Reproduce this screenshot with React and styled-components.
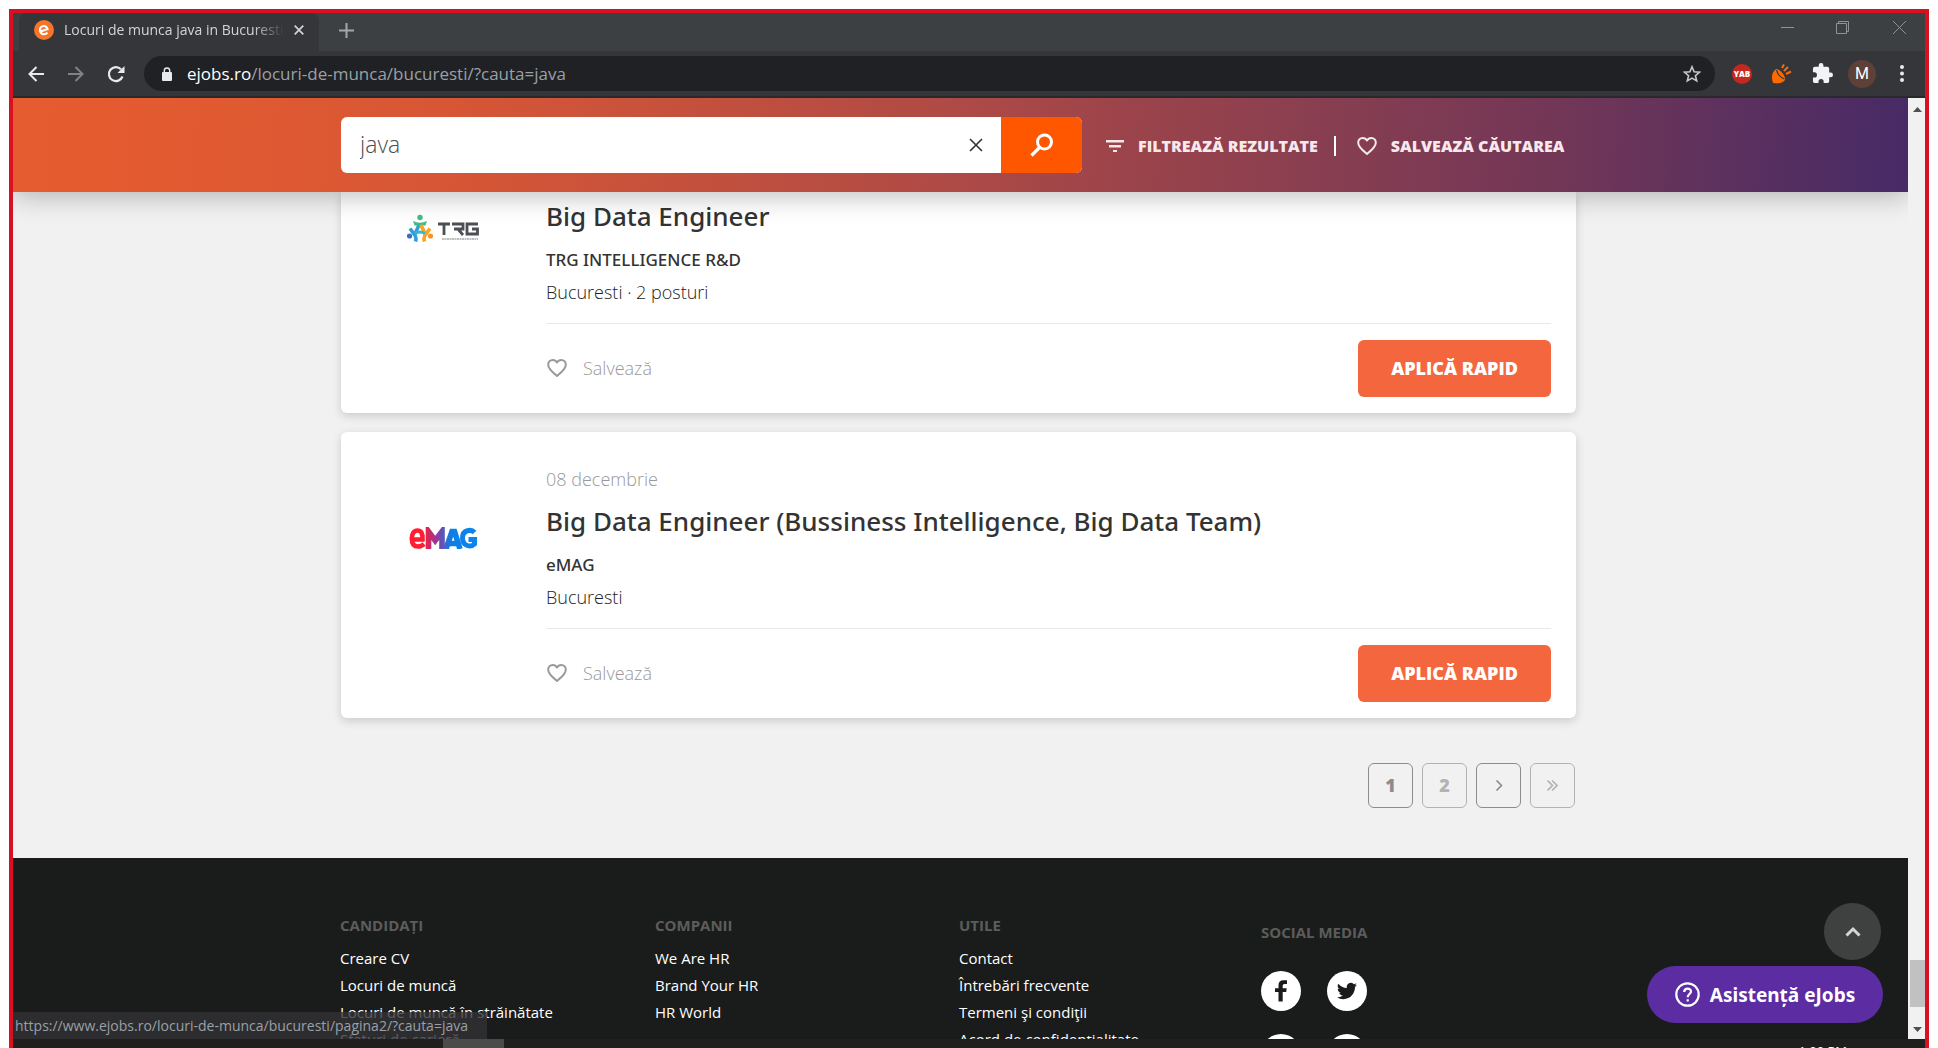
import React from 'react';
import styled, { createGlobalStyle } from 'styled-components';

const Global = createGlobalStyle`
  * { box-sizing: border-box; }
  html, body { margin: 0; height: 100%; }
  #root { height: 100%; }
  body { background: #fff; font-family: "Open Sans", "Noto Sans", sans-serif; color: #333; }
  button, input { font: inherit; border: 0; padding: 0; margin: 0; background: none; color: inherit; }
  button { cursor: pointer; }
  a { color: inherit; text-decoration: none; }
  h2, p, ul { margin: 0; padding: 0; }
  ul { list-style: none; }
  svg { display: block; flex: none; }
`;

const Screen = styled.div`
  height: 100vh;
  padding: 9px 9px 0;
  overflow: hidden;
`;
const Frame = styled.div`
  height: 100%;
  border: 4px solid #d81020;
  border-bottom: 0;
  display: flex;
  flex-direction: column;
`;

/* Browser chrome */
const TabStrip = styled.div`
  display: flex;
  height: 38px;
  flex: none;
  background: #3c4043;
  color: #a5a8ab;
  padding-left: 6px;
`;
const Tab = styled.div`
  width: 300px;
  display: flex;
  align-items: center;
  gap: 10px;
  padding: 0 15px 4px;
  border-radius: 8px 8px 0 0;
  background: #35363a;
  color: #d2d4d6;
`;
const TabTitle = styled.span`
  flex: 1;
  overflow: hidden;
  white-space: nowrap;
  font-size: 14px;
  line-height: 20px;
  mask-image: linear-gradient(to right, #000 86%, transparent);
`;
const ChromeButton = styled.button`
  display: flex;
  align-items: center;
  justify-content: center;
  width: ${p => p.$w || 40}px;
`;
const NewTab = styled(ChromeButton)`
  margin-left: 7px;
  padding-bottom: 4px;
`;
const WindowControls = styled.div`
  display: flex;
  margin-left: auto;
  padding-bottom: 10px;
`;
const Toolbar = styled.div`
  display: flex;
  align-items: center;
  height: 47px;
  flex: none;
  background: #35363a;
  border-bottom: 2px solid #28292b;
  color: #e8eaed;
  padding: 0 3px;
`;
const Address = styled.label`
  flex: 1;
  display: flex;
  align-items: center;
  height: 35px;
  margin-left: 8px;
  margin-right: 7px;
  padding: 0 14px 0 18px;
  border-radius: 18px;
  background: #202124;
  font-size: 17px;
  color: #9aa0a6;
`;
const Url = styled.span`
  flex: 1;
  margin-left: 15px;
  b { font-weight: 400; color: #fff; }
`;
const Avatar = styled.span`
  display: flex;
  align-items: center;
  justify-content: center;
  width: ${p => p.$size}px;
  height: ${p => p.$size}px;
  border-radius: 50%;
  background: ${p => p.$bg};
  color: #fff;
  font: ${p => p.$font};
`;

/* Page */
const Viewport = styled.div`
  position: relative;
  display: flex;
  flex: 1;
  min-height: 0;
`;
const Page = styled.div`
  flex: 1;
  display: flex;
  flex-direction: column;
  background: #f1f1f1;
  overflow: hidden;
`;
const Container = styled.div`
  width: 100%;
  max-width: 1239px;
  margin: 0 auto;
  padding-right: 4px;
`;
const Header = styled.header`
  position: relative;
  z-index: 1;
  flex: none;
  padding: 19px 0;
  background: linear-gradient(94deg, #e65c30 0%, #e45b30 5%, #dc5833 17%, #d35537 26%, #ae4a46 50%, #9d444a 58%, #8a3f50 68%, #713657 82%, #562f60 93%, #472a66 100%);
  box-shadow: 0 3px 26px rgba(0, 0, 0, 0.28);
`;
const HeaderRow = styled(Container)`
  display: flex;
  align-items: center;
`;
const SearchForm = styled.form`
  display: flex;
  width: 741px;
  height: 56px;
  border-radius: 6px;
  overflow: hidden;
  background: #fff;
`;
const SearchInput = styled.input`
  flex: 1;
  min-width: 0;
  padding: 0 0 2px 19px;
  outline: 0;
  font-size: 23px;
  font-weight: 300;
  color: #4d4d4d;
`;
const ClearButton = styled.button`
  width: 51px;
  display: flex;
  align-items: center;
  justify-content: center;
`;
const SearchButton = styled.button`
  width: 81px;
  display: flex;
  align-items: center;
  justify-content: center;
  background: #ff5600;
`;
const HeaderAction = styled.button`
  display: flex;
  align-items: center;
  gap: ${p => p.$gap}px;
  margin-left: ${p => p.$before}px;
  padding-top: 2px;
  color: #f6e9ec;
  font-size: 16px;
  font-weight: 800;
  white-space: nowrap;
`;
const Separator = styled.span`
  width: 2px;
  height: 20px;
  margin: 2px 0 0 16px;
  background: #fff;
`;
const CardList = styled.ul`
  display: flex;
  flex-direction: column;
  gap: 19px;
`;
const Card = styled.li`
  display: flex;
  padding: ${p => (p.$continued ? '6px' : '34px')} 25px 16px 0;
  border-radius: ${p => (p.$continued ? '0 0 6px 6px' : '6px')};
  background: #fff;
  box-shadow: 0 3px 10px rgba(0, 0, 0, 0.16);
`;
const LogoCell = styled.div`
  width: 205px;
  flex: none;
  display: flex;
  justify-content: center;
  align-items: flex-start;
  padding-top: ${p => (p.$continued ? '16px' : '61px')};
  padding-right: 2px;
`;
const CardBody = styled.div`
  flex: 1;
`;
const PostDate = styled.p`
  font-size: 18px;
  font-weight: 300;
  line-height: 26px;
  margin-bottom: 11px;
  color: #999;
`;
const JobTitle = styled.h2`
  font-family: "Noto Sans", "Open Sans", sans-serif;
  font-size: 26px;
  line-height: 36px;
  font-weight: 500;
`;
const Company = styled.p`
  margin-top: 13px;
  font-family: "Noto Sans", "Open Sans", sans-serif;
  font-size: 17px;
  line-height: 26px;
  font-weight: 500;
`;
const Place = styled.p`
  margin-top: 6px;
  font-size: 18px;
  font-weight: 300;
  line-height: 26px;
  color: #222;
`;
const CardFooter = styled.div`
  display: flex;
  justify-content: space-between;
  align-items: center;
  margin-top: 18px;
  padding-top: 16px;
  border-top: 1px solid #e8e8e8;
`;
const SaveButton = styled.button`
  display: flex;
  align-items: center;
  gap: 16px;
  padding: 0 0 2px 1px;
  font-size: 18px;
  font-weight: 300;
  color: #999;
`;
const ApplyButton = styled.button`
  width: 193px;
  height: 57px;
  padding-bottom: 2px;
  border-radius: 6px;
  background: #f3663e;
  color: #fff;
  font-size: 18px;
  font-weight: 800;
`;
const Pagination = styled.nav`
  display: flex;
  justify-content: flex-end;
  gap: 9px;
  margin: 45px 1px 50px 0;
`;
const PageButton = styled.button`
  display: flex;
  align-items: center;
  justify-content: center;
  width: 45px;
  height: 45px;
  padding-bottom: 1px;
  border: 1px solid;
  border-radius: 6px;
  color: ${p => (p.$muted ? '#b3b3b3' : '#8c8c8c')};
  font-size: 18px;
  font-weight: 800;
`;
const Footer = styled.footer`
  flex: 1;
  min-height: 0;
  background: #1a1c1b;
  overflow: hidden;
`;
const FooterGrid = styled(Container)`
  display: grid;
  grid-template-columns: 315px 304px 302px 1fr;
  max-width: 1241px;
  padding-top: 54px;
`;
const FooterHeading = styled.h2`
  padding-top: ${p => (p.$lower ? '7px' : '0')};
  margin-bottom: 7px;
  font-size: 15px;
  line-height: 26px;
  font-weight: 700;
  color: #5c5c5c;
`;
const FooterLinks = styled.ul`
  li { font-size: 15px; line-height: 27px; color: #fff; font-weight: 500; white-space: nowrap; }
`;
const SocialGrid = styled.div`
  display: grid;
  grid-template-columns: 40px 40px;
  column-gap: 26px;
  row-gap: 23px;
  margin-top: 26px;
`;
const SocialLink = styled.a`
  display: flex;
  align-items: center;
  justify-content: center;
  height: 40px;
  border-radius: 50%;
  background: #fff;
`;
const Scrollbar = styled.div`
  width: 17px;
  flex: none;
  display: flex;
  flex-direction: column;
  align-items: center;
  padding: 9px 0 7px 2px;
  background: #f1f1f1;
`;
const Thumb = styled.div`
  width: 15px;
  height: 47px;
  margin: auto 0 20px;
  background: #c1c1c1;
`;
const Floating = styled.div`
  position: absolute;
  right: 42px;
  bottom: 16px;
  display: flex;
  flex-direction: column;
  align-items: flex-end;
  gap: 6px;
`;
const ToTop = styled.button`
  display: flex;
  align-items: center;
  justify-content: center;
  width: 57px;
  height: 57px;
  margin-right: 2px;
  border-radius: 50%;
  background: #3f4140;
`;
const HelpButton = styled.button`
  display: flex;
  align-items: center;
  justify-content: center;
  gap: 10px;
  width: 236px;
  height: 57px;
  border-radius: 29px;
  background: #5b2ca2;
  color: #fff;
  font-family: "Noto Sans", "Open Sans", sans-serif;
  font-size: 19px;
  font-weight: 700;
  white-space: nowrap;
`;
const StatusUrl = styled.div`
  position: absolute;
  left: 0;
  bottom: 0;
  width: 474px;
  height: 27px;
  padding-left: 2px;
  background: rgba(50, 50, 54, 0.8);
  color: #9aa0a6;
  font-size: 14px;
  line-height: 27px;
  white-space: nowrap;
`;
const Taskbar = styled.div`
  display: flex;
  flex: none;
  height: 9px;
  overflow: hidden;
  padding-left: 430px;
  background: #201f20;
`;
const TaskItem = styled.div`
  width: 61px;
  background: #4b4b4b;
`;
const Clock = styled.span`
  margin-left: auto;
  margin-right: 78px;
  padding-top: 2px;
  color: #fff;
  font-size: 13px;
  line-height: 20px;
`;

const Heart = ({ size = 20, w = 2 }) => (
  <svg width={size} height={size} viewBox="0 0 20 20" fill="none" stroke="currentColor" strokeWidth={w} strokeLinejoin="round">
    <path d="M10 18 C6 14.6 1.2 11 1.2 6.7 C1.2 3.9 3.3 2 5.7 2 C7.5 2 9.1 2.9 10 4.5 C10.9 2.9 12.5 2 14.3 2 C16.7 2 18.8 3.9 18.8 6.7 C18.8 11 14 14.6 10 18Z" />
  </svg>
);
const Cross = ({ size, w }) => (
  <svg width={size} height={size} viewBox="0 0 14 14" stroke="currentColor" strokeWidth={w} fill="none">
    <path d="M1 1L13 13M13 1L1 13" />
  </svg>
);

const TrgLogo = () => (
  <svg width="72" height="28" viewBox="0 0 72 28">
    <circle cx="13" cy="3.500" r="2.700" fill="#43bd85" />
    <path d="M6 7q7 3.500 14 0l-1.500 4.500h-11z" fill="#43bd85" />
    <circle cx="2.500" cy="22" r="2.600" fill="#3b6fc4" />
    <circle cx="23.500" cy="22" r="2.600" fill="#f8931f" />
    <path d="M12 11L8 20M3 14.500l4 5.500q3 3 1.500 7.500" fill="none" stroke="#2f9fdc" strokeWidth="3.600" />
    <path d="M14 11l4 9M23 14.500l-4 5.500q-3 3-1.500 7.500" fill="none" stroke="#f6a623" strokeWidth="3.600" />
    <path d="M8 19.500q5-3 10 0" fill="none" stroke="#35b8c8" strokeWidth="3" />
    <path d="M31 10h12M37 10v11M45 10h11v5h-9M51 15l5 6M71 10H60v10h10.500v-5H65" fill="none" stroke="#4c4f53" strokeWidth="2.800" />
    <path d="M35 25h36" stroke="#a9abad" strokeWidth="1.500" strokeDasharray="2 .5" />
  </svg>
);
const EmagLogo = () => (
  <svg width="68" height="22" viewBox="0 0 68 22" fill="none">
    <defs>
      <linearGradient id="emag" gradientUnits="userSpaceOnUse" x1="0" y1="0" x2="68" y2="0">
        <stop offset=".2" stopColor="#ff1f30" />
        <stop offset=".4" stopColor="#9b3596" />
        <stop offset=".62" stopColor="#0b7fe6" />
        <stop offset="1" stopColor="#0a86ee" />
      </linearGradient>
    </defs>
    <g stroke="url(#emag)">
      <path d="M4 12.500h9.500c.4-6.500-1.600-9-5-9S2.800 6.500 2.800 11.500s1.700 8 6 8c3 0 4.500-.8 6.300-2.500" strokeWidth="4.600" />
      <path d="M19.500 22V4.500l6.700 9 6.800-9V22" strokeWidth="5.600" />
      <path d="M37 22l6-17.500h2.500L51 22M40 16.500h8" strokeWidth="5.600" />
      <path d="M65.500 5.500c-3-3.500-12-3-12 5.500s8.500 9.500 12 6V12.500h-6" strokeWidth="5" />
    </g>
  </svg>
);

function JobCard({ continued, date, title, company, place, logo }) {
  return (
    <Card $continued={continued}>
      <LogoCell $continued={continued}>{logo}</LogoCell>
      <CardBody>
        {date && <PostDate>{date}</PostDate>}
        <JobTitle><a href="#job">{title}</a></JobTitle>
        <Company>{company}</Company>
        <Place>{place}</Place>
        <CardFooter>
          <SaveButton type="button"><Heart />Salvează</SaveButton>
          <ApplyButton type="button">APLICĂ RAPID</ApplyButton>
        </CardFooter>
      </CardBody>
    </Card>
  );
}

function LinkColumn({ title, links }) {
  return (
    <div>
      <FooterHeading>{title}</FooterHeading>
      <FooterLinks>{links.map(l => <li key={l}><a href="#footer">{l}</a></li>)}</FooterLinks>
    </div>
  );
}

export default function App() {
  return (
    <Screen>
      <Global />
      <Frame>
        <TabStrip>
          <Tab>
            <svg width="20" height="20" viewBox="0 0 20 20">
              <circle cx="10" cy="10" r="10" fill="#f5752c" />
              <path d="M6.500 11.500l7-2.500c-.6-2-2-3-3.800-3C7.500 6 6 7.800 6 10s1.600 4.200 4 4.200c1.500 0 2.600-.6 3.400-1.600" fill="none" stroke="#fff" strokeWidth="2.200" />
            </svg>
            <TabTitle>Locuri de munca java in Bucuresti</TabTitle>
            <ChromeButton type="button" aria-label="Close tab" $w={10}><Cross size={10} w={2.400} /></ChromeButton>
          </Tab>
          <NewTab type="button" aria-label="New tab">
            <svg width="15" height="15" viewBox="0 0 15 15" stroke="currentColor" strokeWidth="2"><path d="M0 7.500h15M7.500 0v15" /></svg>
          </NewTab>
          <WindowControls>
            <ChromeButton type="button" $w={48}><svg width="13" height="13" stroke="#909396"><path d="M0 6.500h13" /></svg></ChromeButton>
            <ChromeButton type="button" $w={63}>
              <svg width="13" height="13" fill="none" stroke="#909396"><path d="M.5 2.500h10v10H.5zM2.500 2.500v-2h10v10h-2" /></svg>
            </ChromeButton>
            <ChromeButton type="button" $w={51}><svg width="13" height="13" stroke="#909396"><path d="M0 0L13 13M13 0L0 13" /></svg></ChromeButton>
          </WindowControls>
        </TabStrip>
        <Toolbar>
          <ChromeButton type="button">
            <svg width="16" height="16" viewBox="0 0 16 16" fill="none" stroke="currentColor" strokeWidth="2"><path d="M16 8H1.500M8.500 1L1.500 8l7 7" /></svg>
          </ChromeButton>
          <ChromeButton type="button">
            <svg width="16" height="16" viewBox="0 0 16 16" fill="none" stroke="#808386" strokeWidth="2"><path d="M0 8h14.500M7.500 1l7 7-7 7" /></svg>
          </ChromeButton>
          <ChromeButton type="button">
            <svg width="18" height="18" viewBox="0 0 18 18" fill="none" stroke="currentColor" strokeWidth="2.200"><path d="M15.500 11.500A7 7 0 1 1 14 4.200" /><path d="M17.500 1v7h-7z" fill="currentColor" stroke="none" /></svg>
          </ChromeButton>
          <Address>
            <svg width="10" height="14" viewBox="0 0 10 14"><rect y="5" width="10" height="9" rx="1" fill="#e8eaed" /><path d="M2.300 5.500V3.700a2.700 2.700 0 0 1 5.400 0v1.800" fill="none" stroke="#e8eaed" strokeWidth="1.400" /></svg>
            <Url><b>ejobs.ro</b>/locuri-de-munca/bucuresti/?cauta=java</Url>
            <svg width="18" height="18" viewBox="0 0 18 18" fill="none" stroke="#c6c8ca" strokeWidth="1.600"><path d="M9 1.800l2.100 5 5.400.4-4.100 3.500 1.300 5.200L9 13.100l-4.700 2.800 1.300-5.200-4.100-3.500 5.400-.4z" /></svg>
          </Address>
          <ChromeButton type="button"><Avatar $size={20} $bg="#c5281f" $font='800 8px "Open Sans", sans-serif'>YAB</Avatar></ChromeButton>
          <ChromeButton type="button">
            <svg width="20" height="20" viewBox="0 0 20 20"><path d="M4 5C-1 9-.5 14 1 19c6 .8 10 0 12-3 1.500-3-6-12-9-11z" fill="#ff6a00" /><path d="M4.500 6c1 4 4 7.500 8 9" stroke="#35363a" strokeWidth="1.200" fill="none" /><path d="M10 4l2-3.500M12 7l4-4M14 10l5-2.500" stroke="#ff6a00" strokeWidth="2" /></svg>
          </ChromeButton>
          <ChromeButton type="button">
            <svg width="21" height="21" viewBox="1 1 22 22" fill="#f1f3f4"><path d="M20.500 11H19V7c0-1.100-.9-2-2-2h-4V3.500a2.500 2.500 0 0 0-5 0V5H4c-1.100 0-2 .9-2 2v3.800h1.500a2.700 2.700 0 0 1 0 5.400H2V20c0 1.100.9 2 2 2h3.800v-1.500a2.700 2.700 0 0 1 5.400 0V22H17c1.100 0 2-.9 2-2v-4h1.500a2.500 2.500 0 0 0 0-5z" /></svg>
          </ChromeButton>
          <ChromeButton type="button"><Avatar $size={28} $bg="#5d4037" $font="400 16px Roboto, sans-serif">M</Avatar></ChromeButton>
          <ChromeButton type="button">
            <svg width="4" height="17" fill="currentColor"><circle cx="2" cy="2" r="2" /><circle cx="2" cy="8.500" r="2" /><circle cx="2" cy="15" r="2" /></svg>
          </ChromeButton>
        </Toolbar>
        <Viewport>
          <Page>
            <Header>
              <HeaderRow>
                <SearchForm onSubmit={e => e.preventDefault()}>
                  <SearchInput aria-label="Caută" defaultValue="java" />
                  <ClearButton type="button" aria-label="Șterge"><Cross size={14} w={1.600} /></ClearButton>
                  <SearchButton type="submit" aria-label="Caută">
                    <svg width="24" height="24" viewBox="0 0 24 24" fill="none" stroke="#fff"><circle cx="14.500" cy="9" r="7" strokeWidth="3" /><path d="M9.500 14.500L1.500 22.500" strokeWidth="3.200" /></svg>
                  </SearchButton>
                </SearchForm>
                <HeaderAction type="button" $before={24} $gap={14}>
                  <svg width="18" height="12" viewBox="0 0 18 12" fill="currentColor"><path d="M0 0h18v2.400H0zM3 5h12v2.400H3zM7 10h4v2H7z" /></svg>
                  FILTREAZĂ REZULTATE
                </HeaderAction>
                <Separator />
                <HeaderAction type="button" $before={21} $gap={14}>
                  <Heart />
                  SALVEAZĂ CĂUTAREA
                </HeaderAction>
              </HeaderRow>
            </Header>
            <Container>
              <CardList>
                <JobCard continued title="Big Data Engineer" company="TRG INTELLIGENCE R&D" place="Bucuresti · 2 posturi" logo={<TrgLogo />} />
                <JobCard date="08 decembrie" title="Big Data Engineer (Bussiness Intelligence, Big Data Team)" company="eMAG" place="Bucuresti" logo={<EmagLogo />} />
              </CardList>
              <Pagination>
                <PageButton type="button">1</PageButton>
                <PageButton type="button" $muted>2</PageButton>
                <PageButton type="button"><svg width="8" height="11" fill="none" stroke="currentColor" strokeWidth="1.600"><path d="M1.500 .5l5 5-5 5" /></svg></PageButton>
                <PageButton type="button" $muted><svg width="11" height="11" fill="none" stroke="currentColor" strokeWidth="1.600"><path d="M.5 .5l5 5-5 5M5 .5l5 5-5 5" /></svg></PageButton>
              </Pagination>
            </Container>
            <Footer>
              <FooterGrid>
                <LinkColumn title="CANDIDAȚI" links={['Creare CV', 'Locuri de muncă', 'Locuri de muncă în străinătate', 'Sfaturi de carieră']} />
                <LinkColumn title="COMPANII" links={['We Are HR', 'Brand Your HR', 'HR World']} />
                <LinkColumn title="UTILE" links={['Contact', 'Întrebări frecvente', 'Termeni şi condiţii', 'Acord de confidențialitate']} />
                <div>
                  <FooterHeading $lower>SOCIAL MEDIA</FooterHeading>
                  <SocialGrid>
                    <SocialLink href="#facebook" aria-label="Facebook">
                      <svg width="12" height="22" viewBox="0 0 12 22" fill="#1a1c1b"><path d="M3.500 21.500V12H0V8.300h3.500V5.200C3.500 2 5.300.3 8.300.3H12v3.600H9.600c-1.400 0-1.900.7-1.900 1.900v2.500h4L11.200 12H7.700v9.500z" /></svg>
                    </SocialLink>
                    <SocialLink href="#twitter" aria-label="Twitter">
                      <svg width="20" height="20" viewBox="0 0 24 24" fill="#1a1c1b"><path d="M23.950 4.570a10 10 0 0 1-2.820.775 4.960 4.960 0 0 0 2.160-2.720c-.95.555-2.005.96-3.130 1.180a4.920 4.920 0 0 0-8.380 4.480C7.690 8.095 4.070 6.130 1.640 3.160a4.920 4.920 0 0 0 1.520 6.570 4.900 4.900 0 0 1-2.230-.615v.06a4.920 4.920 0 0 0 3.950 4.830 5 5 0 0 1-2.210.085 4.940 4.940 0 0 0 4.600 3.420A9.870 9.870 0 0 1 0 19.540a14 14 0 0 0 7.550 2.210c9.050 0 14-7.500 14-13.980 0-.21 0-.42-.015-.63a9.940 9.940 0 0 0 2.460-2.550z" /></svg>
                    </SocialLink>
                    <SocialLink href="#instagram" aria-label="Instagram" />
                    <SocialLink href="#linkedin" aria-label="LinkedIn" />
                  </SocialGrid>
                </div>
              </FooterGrid>
            </Footer>
          </Page>
          <Scrollbar>
            <svg width="9" height="5" fill="#505050"><path d="M0 5L4.500 0 9 5z" /></svg>
            <Thumb />
            <svg width="9" height="5" fill="#505050"><path d="M0 0L4.500 5 9 0z" /></svg>
          </Scrollbar>
          <Floating>
            <ToTop type="button" aria-label="Sus">
              <svg width="16" height="11" fill="none" stroke="#d5d5d5" strokeWidth="3"><path d="M1.500 9.500L8 3l6.500 6.500" /></svg>
            </ToTop>
            <HelpButton type="button">
              <svg width="25" height="25" viewBox="0 0 25 25" fill="none" stroke="#fff" strokeWidth="2.200"><circle cx="12.500" cy="12.500" r="11.200" /><path d="M9.200 10c0-4.500 6.800-4.500 6.800-.5 0 2.500-3.300 2.700-3.300 5.800M12.700 17.200v2.400" /></svg>
              Asistență eJobs
            </HelpButton>
          </Floating>
          <StatusUrl>https://www.ejobs.ro/locuri-de-munca/bucuresti/pagina2/?cauta=java</StatusUrl>
        </Viewport>
        <Taskbar>
          <TaskItem />
          <Clock>1:00 PM</Clock>
        </Taskbar>
      </Frame>
    </Screen>
  );
}
